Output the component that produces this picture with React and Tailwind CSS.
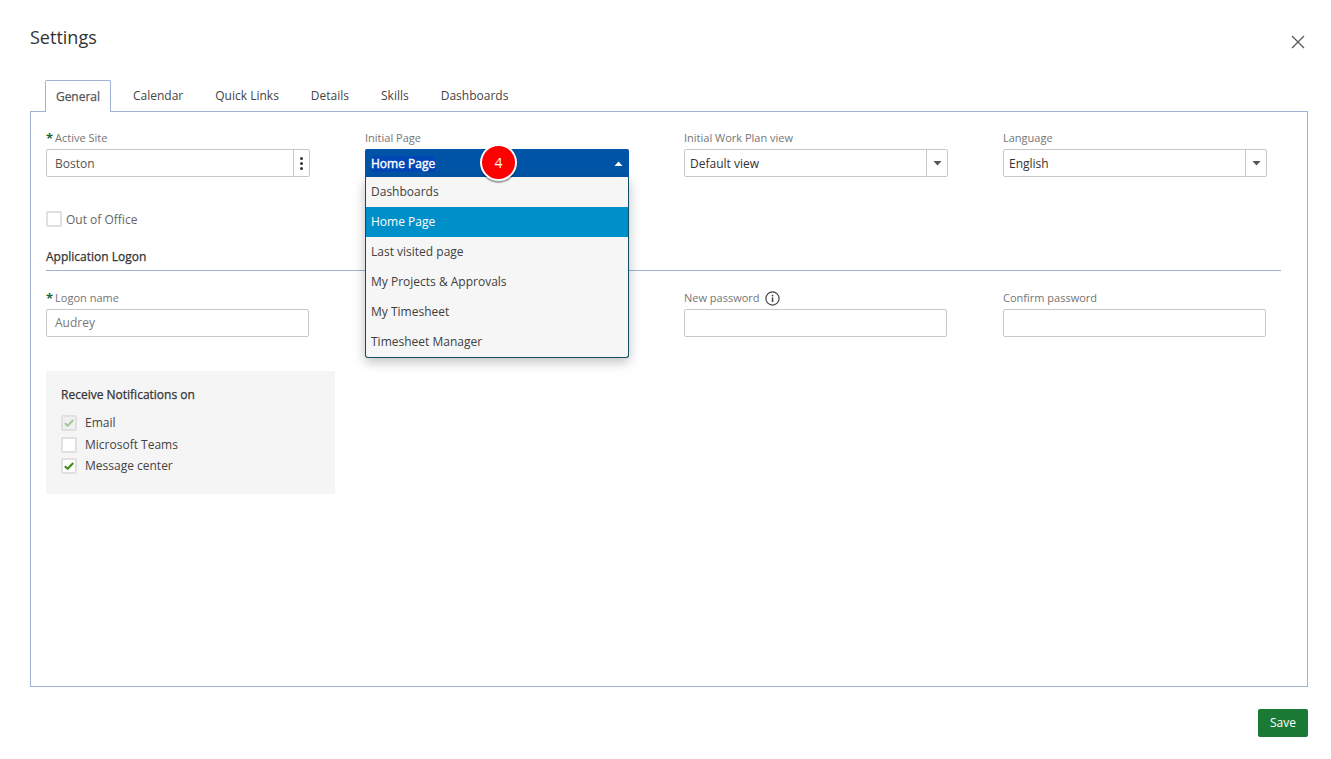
import React from "react";

function Label({ children, req, extra }) {
  return (
    <div className="h-4 flex items-center text-[11px] leading-4 text-[#757575] whitespace-nowrap">
      {req && <span className="text-[#1a6b45] font-bold text-[13px] mr-[2px]">*</span>}
      <span className={req ? "font-medium" : ""}>{children}</span>
      {extra}
    </div>
  );
}

function Caret({ up, color }) {
  return (
    <svg width="9" height="5" viewBox="0 0 9 5" className="block">
      <path d={up ? "M0.5 5L4.5 0.5L8.5 5Z" : "M0.5 0L8.5 0L4.5 4.5Z"} fill={color} />
    </svg>
  );
}

function SelectBox({ value }) {
  return (
    <div className="mt-[3px] h-7 w-[264px] flex border border-[#c8c8c8] rounded-[2px] bg-white text-[12px] text-[#333]">
      <div className="flex-1 pl-[5px] pt-px flex items-center">{value}</div>
      <div className="w-[21px] border-l border-[#c8c8c8] flex items-center justify-center">
        <Caret color="#555" />
      </div>
    </div>
  );
}

function TextBox({ value }) {
  return (
    <div className="mt-[3px] h-7 w-[263px] border border-[#c8c8c8] rounded-[2px] bg-white pl-2 flex items-center text-[12px] text-[#777]">
      {value}
    </div>
  );
}

function Check({ state }) {
  const stroke = state === "dim" ? "#a5c79a" : "#3f8a14";
  return (
    <span className={`w-4 h-4 rounded-[2px] border-2 border-[#e0e0e0] flex items-center justify-center ${state === "dim" ? "bg-[#f0f0f0]" : "bg-white"}`}>
      {state && (
        <svg width="10" height="8" viewBox="0 0 10 8">
          <path d="M0.8 4.2L3.7 6.8L9.2 1" fill="none" stroke={stroke} strokeWidth="2" />
        </svg>
      )}
    </span>
  );
}

function Tab({ children, active }) {
  if (active) {
    return (
      <div className="h-[32px] w-[66px] border border-b-0 border-[#9db3d1] rounded-t-[2px] bg-white relative z-10 pt-px flex items-center justify-center text-[12px] font-medium text-[#555] [-webkit-text-stroke:0.25px_#555]">
        {children}
      </div>
    );
  }
  return <div className="h-[31px] px-[16px] pt-px flex items-center text-[12px] text-[#444]">{children}</div>;
}

export default function App() {
  const items = ["Dashboards", "Home Page", "Last visited page", "My Projects & Approvals", "My Timesheet", "Timesheet Manager"];
  return (
    <div className="w-[1331px] h-[759px] bg-white overflow-hidden pl-[30px] pr-[23px] font-['Open_Sans',sans-serif] text-[#333]">
      <div className="h-[80px] flex justify-between">
        <div className="text-[18px] leading-6 pt-[25px] text-[#333] box-content">Settings</div>
        <svg width="14" height="14" viewBox="0 0 14 14" className="mt-[35px] mr-[3px]">
          <path d="M1 1L13 13M13 1L1 13" stroke="#555" strokeWidth="1.2" />
        </svg>
      </div>

      <div className="flex pl-[15px] h-[32px] -mb-px">
        <Tab active>General</Tab>
        <div className="w-[6px]" />
        <Tab>Calendar</Tab>
        <Tab>Quick Links</Tab>
        <Tab>Details</Tab>
        <Tab>Skills</Tab>
        <Tab>Dashboards</Tab>
      </div>

      <div className="h-[576px] border border-[#9db3d1] pl-[15px] pt-[18px]">
        <div className="grid grid-cols-[264px_264px_264px_264px] gap-x-[55px]">
          <div>
            <Label req>Active Site</Label>
            <div className="mt-[3px] h-7 w-[264px] flex border border-[#c8c8c8] rounded-[2px] bg-white text-[12px] text-[#555]">
              <div className="flex-1 pl-2 pt-px flex items-center">Boston</div>
              <div className="w-[16px] border-l border-[#c8c8c8] flex flex-col items-center justify-center gap-[2px]">
                <span className="w-[3px] h-[3px] rounded-full bg-[#333]" />
                <span className="w-[3px] h-[3px] rounded-full bg-[#333]" />
                <span className="w-[3px] h-[3px] rounded-full bg-[#333]" />
              </div>
            </div>
          </div>

          <div className="relative">
            <Label>Initial Page</Label>
            <div className="mt-[3px] h-7 w-[264px] flex items-center justify-between bg-[#0054a6] rounded-t-[2px] pl-[6px] pr-[6px] text-white">
              <span className="text-[12px] font-medium bg-[#0046b4] leading-[16px] mt-px [-webkit-text-stroke:0.4px_#ffffff]">Home Page</span>
              <Caret up color="#ffffff" />
            </div>
            <div className="absolute left-0 top-[47px] w-[264px] h-[181px] bg-[#f6f6f6] border border-t-0 border-[#0e4f66] rounded-b-[3px] shadow-[0_4px_12px_rgba(0,0,0,0.25)] z-20 text-[12px] text-[#404040]">
              {items.map((t) => (
                <div key={t} className={`h-[30px] pl-[5px] flex items-center ${t === "Home Page" ? "bg-[#0090c9] text-white" : ""}`}>
                  {t}
                </div>
              ))}
            </div>
            <div className="absolute left-[115px] top-[14px] w-[37px] h-[37px] rounded-full bg-[#ff0000] border-[2px] border-white shadow-[0_2px_1px_rgba(0,0,0,0.35)] z-30 flex items-center justify-center text-white text-[14px]">
              4
            </div>
          </div>

          <div>
            <Label>Initial Work Plan view</Label>
            <SelectBox value="Default view" />
          </div>
          <div>
            <Label>Language</Label>
            <SelectBox value="English" />
          </div>
        </div>

        <div className="mt-[34px] flex items-center h-4 text-[12px] text-[#666]">
          <span className="w-4 h-4 rounded-[2px] border-2 border-[#e0e0e0] bg-white mr-1" />
          <span className="pt-px">Out of Office</span>
        </div>

        <div className="mt-[21px] w-[1235px] h-[23px] border-b border-[#9db3d1] text-[12px] font-medium leading-[18px] text-[#333] [-webkit-text-stroke:0.25px_#333]">
          Application Logon
        </div>

        <div className="mt-[19px] grid grid-cols-[264px_264px_264px_264px] gap-x-[55px]">
          <div>
            <Label req>Logon name</Label>
            <TextBox value="Audrey" />
          </div>
          <div />
          <div>
            <Label
              extra={
                <svg width="15" height="15" viewBox="0 0 15 15" className="ml-[5px]">
                  <circle cx="7.5" cy="7.5" r="6.6" fill="none" stroke="#444" strokeWidth="1.2" />
                  <rect x="6.8" y="6.4" width="1.5" height="4.6" fill="#444" />
                  <rect x="6.8" y="3.8" width="1.5" height="1.6" fill="#444" />
                </svg>
              }
            >
              New password
            </Label>
            <TextBox />
          </div>
          <div>
            <Label>Confirm password</Label>
            <TextBox />
          </div>
        </div>

        <div className="mt-[34px] w-[289px] h-[123px] bg-[#f5f5f5] rounded-[2px] pl-[15px] pt-[15px]">
          <div className="text-[12px] font-medium leading-[18px] text-[#333] [-webkit-text-stroke:0.25px_#333]">Receive Notifications on</div>
          <div className="mt-[11px] flex flex-col gap-[5.5px] text-[12px] text-[#444]">
            {[["Email", "dim"], ["Microsoft Teams", null], ["Message center", "on"]].map(([t, s]) => (
              <div key={t} className="h-4 flex items-center gap-2">
                <Check state={s} />
                {t}
              </div>
            ))}
          </div>
        </div>
      </div>

      <div className="mt-[22px] flex justify-end">
        <div className="w-[50px] h-7 bg-[#1a7a35] rounded-[2px] flex items-center justify-center text-white text-[12px]">Save</div>
      </div>
    </div>
  );
}
